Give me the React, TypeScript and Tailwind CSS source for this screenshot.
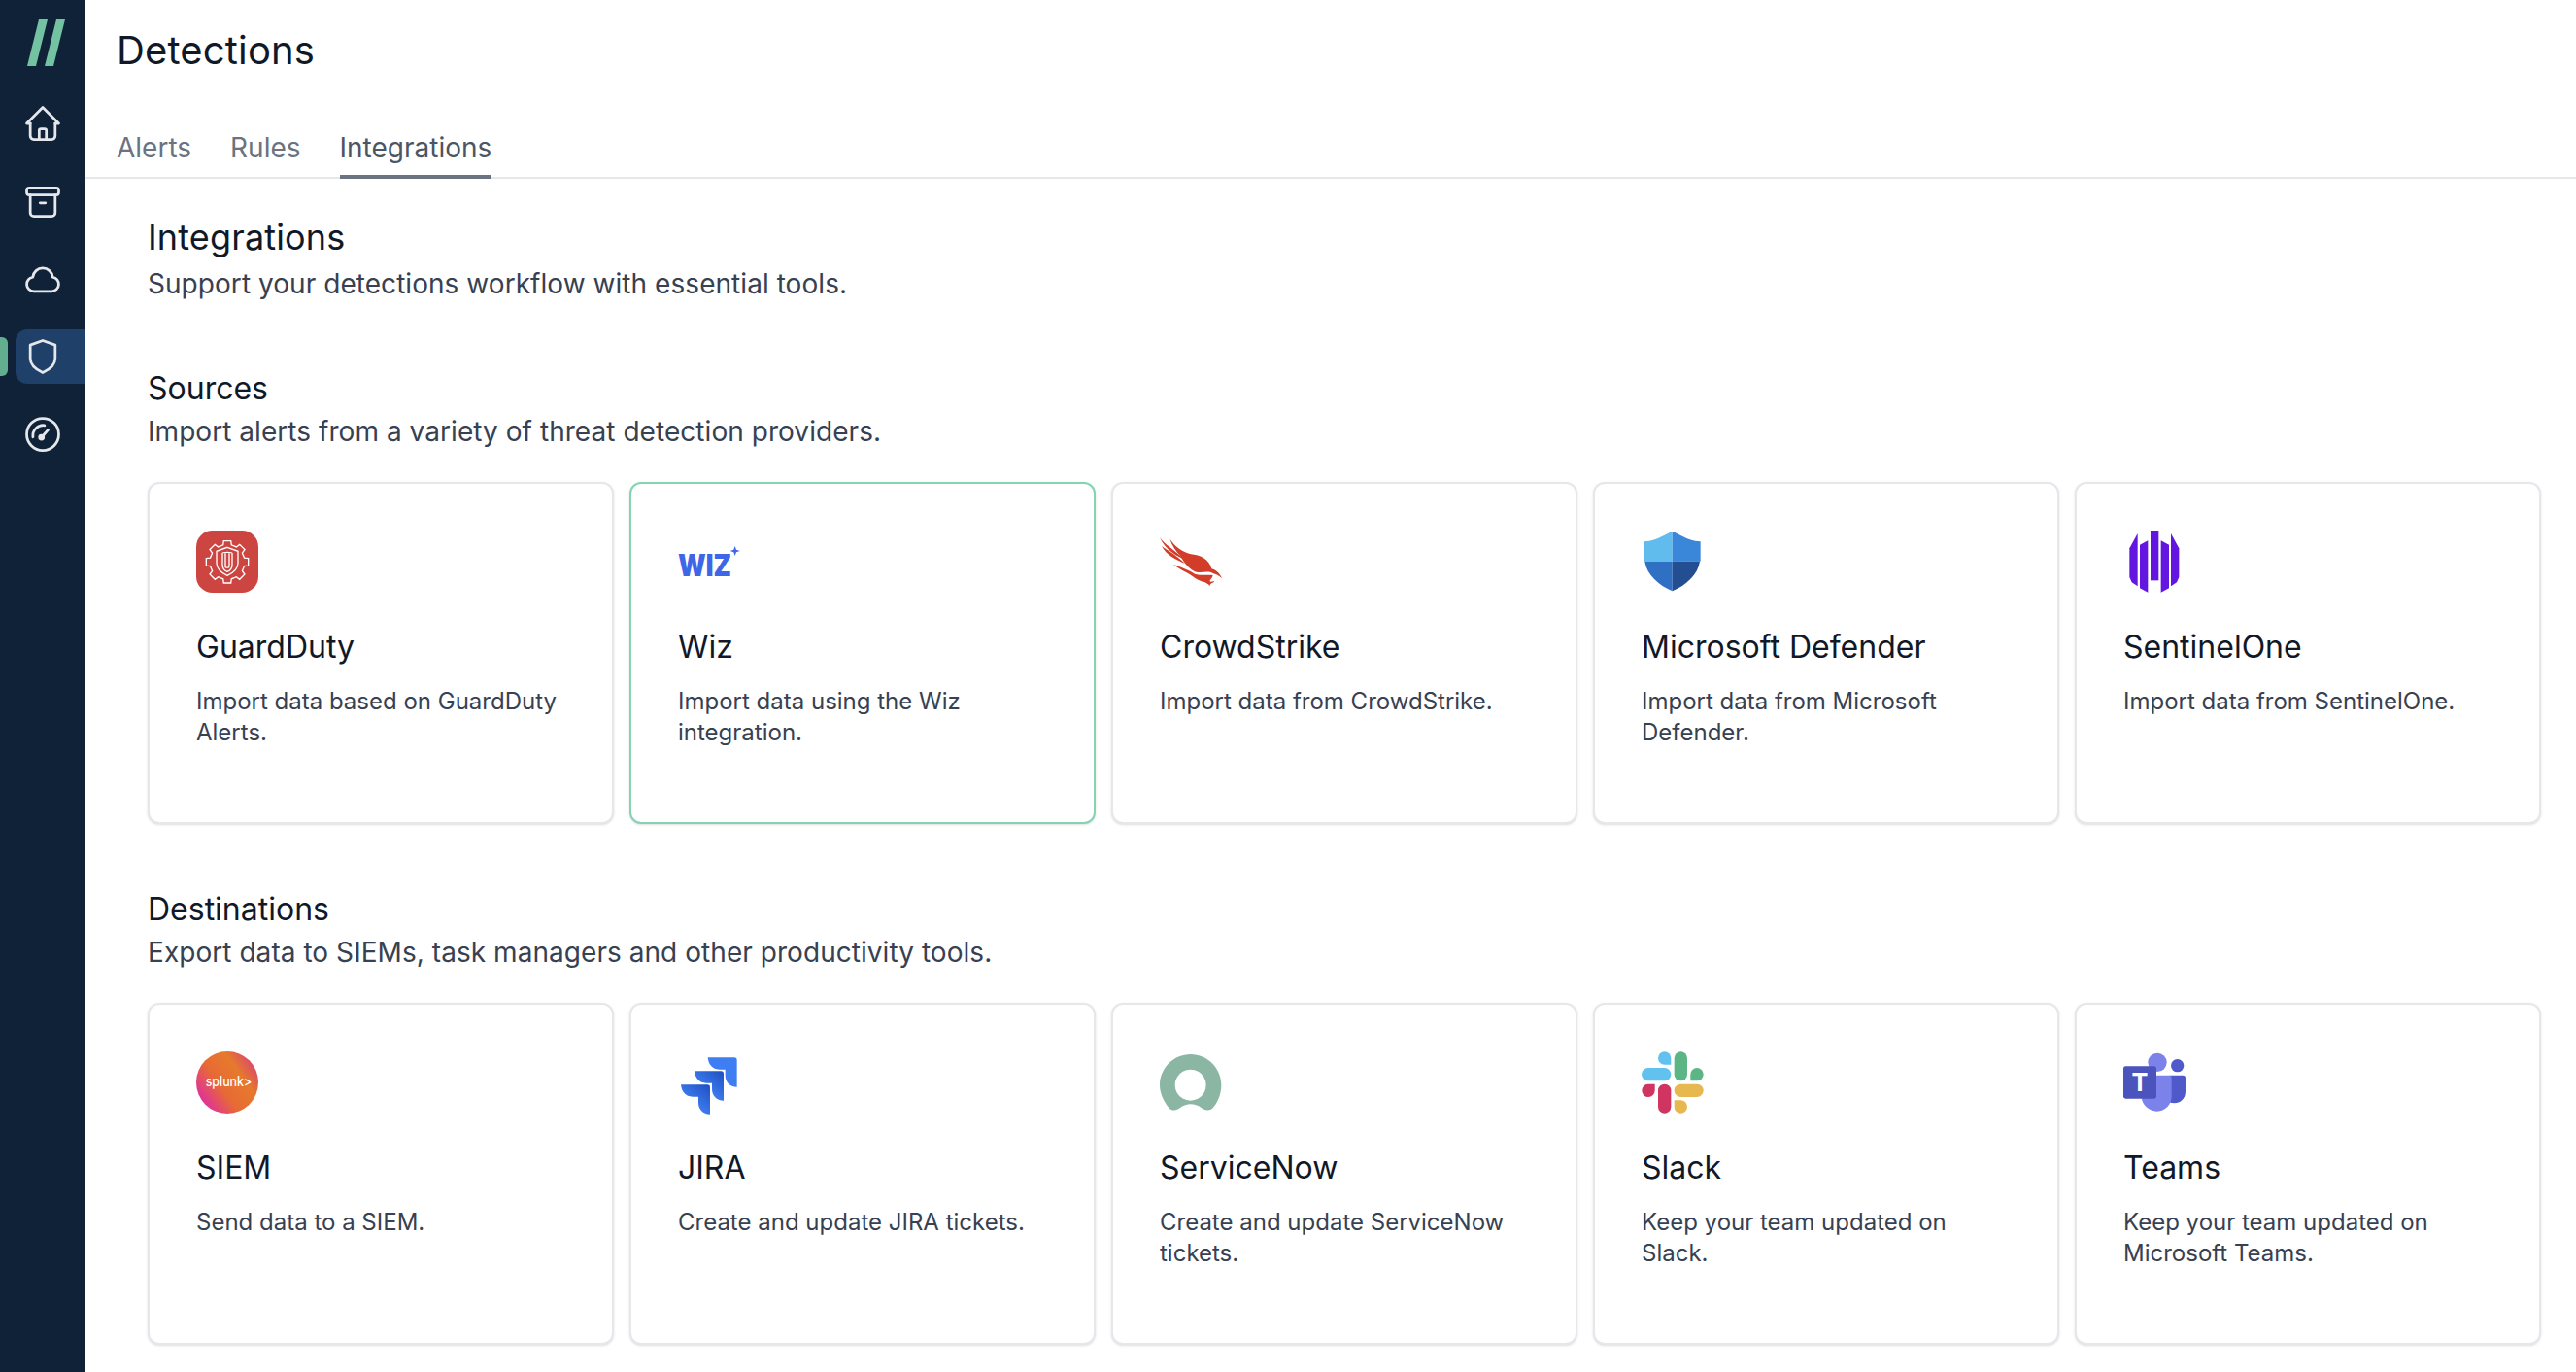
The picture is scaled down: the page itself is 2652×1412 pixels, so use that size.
import { ReactNode } from "react";

const gearPoints = () => {
  const pts: string[] = [];
  for (let i = 0; i < 8; i++) {
    const a = (i * Math.PI) / 4 - Math.PI / 2;
    const step = [
      [-0.24, 54],
      [-0.17, 66],
      [0.17, 66],
      [0.24, 54],
    ];
    step.forEach(([d, r]) => {
      pts.push(`${(162 + r * Math.cos(a + d)).toFixed(1)},${(145 + r * Math.sin(a + d)).toFixed(1)}`);
    });
  }
  return pts.join(" ");
};

const Logo = ({ box, children }: { box: string; children: ReactNode }) => (
  <svg viewBox={box} className="h-16 w-16 overflow-visible">
    {children}
  </svg>
);

const GuardDuty = () => (
  <Logo box="66 48 192 192">
    <rect x="66" y="48" width="192" height="192" rx="50" fill="#cd4540" />
    <g fill="none" stroke="#fff" strokeWidth="4">
      <polygon points={gearPoints()} />
      <path d="M162 100 L195 112 V148 C195 168 178 180 162 187 C146 180 129 168 129 148 V112 Z" />
      <path d="M147 118 C147 114 177 114 177 118 V152 C177 164 170 172 162 175 C154 172 147 164 147 152 Z" />
      <path d="M156 118 V158 C156 164 168 164 168 158 V118" />
    </g>
  </Logo>
);

const Wiz = () => (
  <Logo box="114 78 192 192">
    <text x="114" y="219" textLength="165" lengthAdjust="spacingAndGlyphs" fontSize="96" fontWeight="900" fill="#3f66e6">
      WIZ
    </text>
    <path d="M290 126 L294 137 L305 141 L294 145 L290 156 L286 145 L275 141 L286 137 Z" fill="#3f66e6" />
  </Logo>
);

const CrowdStrike = () => (
  <Logo box="72 48 192 192">
    <g fill="#d23d2a">
      <path d="M103 74 C120 98 140 112 165 120 C200 124 224 136 232 166 C245 170 258 180 264 196 C255 186 245 182 236 180 C220 170 205 180 185 176 C165 170 148 150 136 126 C122 112 110 95 103 74 Z" />
      <path d="M72 69 C88 92 112 104 150 138 C126 128 88 108 72 69 Z" />
      <path d="M78 96 C96 110 122 122 150 150 C122 138 92 124 78 96 Z" />
      <path d="M114 154 C132 158 160 170 180 182 C200 188 216 184 236 186 C234 198 224 200 228 206 C234 206 238 204 241 206 C232 210 228 212 226 219 C222 212 216 212 212 208 C196 204 184 198 172 188 C156 178 134 168 114 154 Z" />
    </g>
  </Logo>
);

const Defender = () => (
  <Logo box="60 48 192 192">
    <path d="M155 52 C135 55 115 80 68 82 V143 H155 Z" fill="#5fbcec" />
    <path d="M155 52 C175 55 195 80 242 82 V143 H155 Z" fill="#3a86d8" />
    <path d="M70 143 H155 V235 C112 216 76 184 70 143 Z" fill="#2f6fc4" />
    <path d="M240 143 H155 V235 C198 216 234 184 240 143 Z" fill="#234f92" />
  </Logo>
);

const SentinelOne = () => (
  <Logo box="48 48 192 192">
    <g fill="#6316e0">
      <rect x="132" y="48" width="25" height="154" />
      <path d="M99 92 L124 79 V239 L99 226 Z" />
      <path d="M164 79 L189 92 V226 L164 239 Z" />
      <path d="M92 57 V220 L74 208 L67 192 V103 Z" />
      <path d="M195 57 V220 L213 208 L220 192 V103 Z" />
    </g>
  </Logo>
);

const Splunk = () => (
  <Logo box="66 66 192 192">
    <defs>
      <linearGradient id="splunkGrad" x1="0" y1="0.85" x2="1" y2="0.15">
        <stop offset="0.08" stopColor="#e0309c" />
        <stop offset="0.4" stopColor="#e76a35" />
        <stop offset="0.7" stopColor="#e67a2c" />
        <stop offset="0.95" stopColor="#da4670" />
      </linearGradient>
    </defs>
    <circle cx="162" cy="162" r="96" fill="url(#splunkGrad)" />
    <text x="95" y="174" textLength="143" lengthAdjust="spacingAndGlyphs" fontSize="42" fontWeight="500" fill="#fff">
      splunk&gt;
    </text>
  </Logo>
);

const jiraPiece = "M146 85 H228 a8 8 0 0 1 8 8 V176 C214 176 200 160 200 140 V122 H182 C160 122 148 106 146 85 Z";

const Jira = () => (
  <Logo box="54 66 192 192">
    <defs>
      <linearGradient id="jiraGrad" x1="1" y1="0" x2="0.4" y2="0.7">
        <stop offset="0" stopColor="#1d4fc0" />
        <stop offset="1" stopColor="#3f7ef2" />
      </linearGradient>
    </defs>
    <path d={jiraPiece} fill="#3f7ef2" />
    <path d={jiraPiece} fill="url(#jiraGrad)" transform="translate(-41,42)" />
    <path d={jiraPiece} fill="url(#jiraGrad)" transform="translate(-83,84)" />
  </Logo>
);

const ServiceNow = () => (
  <Logo box="72 66 192 192">
    <path
      fillRule="evenodd"
      fill="#8bb6a3"
      d="M167 75 C115 75 72 118 72 170 C72 195 85 222 100 240 C110 252 125 248 135 240 C155 225 180 225 200 240 C210 248 228 252 238 238 C252 222 262 195 262 170 C262 118 219 75 167 75 Z M167 122 A48 48 0 1 1 166.9 122 Z"
    />
  </Logo>
);

const Slack = () => (
  <Logo box="60 66 192 192">
    <path d="M131 67 a20 20 0 0 1 20 20 V107 H131 a20 20 0 0 1 0 -40 Z" fill="#62c2ef" />
    <rect x="60" y="117" width="91" height="40" rx="20" fill="#62c2ef" />
    <rect x="161" y="67" width="40" height="90" rx="20" fill="#5bb585" />
    <path d="M231 117 a20 20 0 0 1 0 40 H211 V137 a20 20 0 0 1 20 -20 Z" fill="#5bb585" />
    <path d="M80 167 H101 V187 a20 20 0 1 1 -21 -20 Z" fill="#cf3560" />
    <rect x="111" y="167" width="40" height="90" rx="20" fill="#cf3560" />
    <rect x="161" y="167" width="90" height="40" rx="20" fill="#e6b84f" />
    <path d="M161 217 H181 a20 20 0 0 1 0 40 a20 20 0 0 1 -20 -20 Z" fill="#e6b84f" />
  </Logo>
);

const Teams = () => (
  <Logo box="48 66 192 192">
    <circle cx="215" cy="110" r="20" fill="#5059c9" />
    <path d="M190 140 H232 a8 8 0 0 1 8 8 V190 C240 212 224 226 205 226 C195 226 190 222 190 222 Z" fill="#5059c9" />
    <circle cx="153" cy="100" r="29" fill="#7b83eb" />
    <path d="M112 140 H190 a7 7 0 0 1 7 7 V205 C197 232 176 251 152 251 C128 251 104 232 104 205 V148 a8 8 0 0 1 8 -8 Z" fill="#7b83eb" />
    <rect x="48" y="112" width="102" height="100" rx="7" fill="#4b53bc" />
    <text x="99" y="188" textAnchor="middle" fontSize="76" fontWeight="700" fill="#fff">
      T
    </text>
  </Logo>
);

const iconProps = {
  viewBox: "0 0 24 24",
  fill: "none",
  stroke: "#e5e7eb",
  strokeWidth: 1.5,
  strokeLinecap: "round" as const,
  strokeLinejoin: "round" as const,
  className: "h-11 w-11",
};

const HomeIcon = () => (
  <svg {...iconProps}>
    <path d="M5 12H3l9-9 9 9h-2" />
    <path d="M5 12v7a2 2 0 0 0 2 2h10a2 2 0 0 0 2-2v-7" />
    <path d="M10 21v-5a1 1 0 0 1 1-1h2a1 1 0 0 1 1 1v5" />
  </svg>
);

const ArchiveIcon = () => (
  <svg {...iconProps}>
    <rect x="3" y="4.500" width="18" height="4" rx="1.4" />
    <path d="M5 8.500v10a2 2 0 0 0 2 2h10a2 2 0 0 0 2-2v-10" />
    <path d="M10.500 13h3" />
  </svg>
);

const CloudIcon = () => (
  <svg {...iconProps}>
    <path d="M7 19a4 4 0 0 1-.6-7.950A5.600 5.600 0 0 1 12 6a5.600 5.600 0 0 1 5.600 5.050A4 4 0 0 1 17 19Z" />
  </svg>
);

const ShieldIcon = () => (
  <svg {...iconProps}>
    <path d="M12 3 19 5.500v7.500c0 3.600-3.400 6.400-7 8-3.600-1.600-7-4.400-7-8V5.500Z" />
  </svg>
);

const GaugeIcon = () => (
  <svg {...iconProps}>
    <circle cx="12" cy="12" r="9" />
    <path d="M6.500 13.500a5.800 5.800 0 0 1 6.500-6.500" />
    <path d="M11.500 13.500l3.500-4" />
    <circle cx="11.300" cy="13.700" r="1.100" fill="#e5e7eb" />
  </svg>
);

const NavItem = ({ active, children }: { active?: boolean; children: ReactNode }) => (
  <div className="relative flex h-14 items-center pl-4">
    {active && <span className="absolute left-0 top-2 h-10 w-2 rounded-r-md bg-[#62ae8f]" />}
    <div className={`flex h-14 w-[72px] items-center rounded-l-xl pl-[6px] ${active ? "bg-[#1f4068]" : ""}`}>
      {children}
    </div>
  </div>
);

const Sidebar = () => (
  <aside className="flex h-full w-[88px] shrink-0 flex-col bg-[#102238]">
    <div className="flex h-[99px] items-start pl-[27px] pt-5">
      <svg viewBox="0 0 42 48" className="h-12 w-[42px]">
        <path d="M13 0h9L10 48H1Z M31 0h9L28 48h-9Z" fill="#73c2a1" />
      </svg>
    </div>
    <nav className="flex flex-col gap-6">
      <NavItem>
        <HomeIcon />
      </NavItem>
      <NavItem>
        <ArchiveIcon />
      </NavItem>
      <NavItem>
        <CloudIcon />
      </NavItem>
      <NavItem active>
        <ShieldIcon />
      </NavItem>
      <NavItem>
        <GaugeIcon />
      </NavItem>
    </nav>
  </aside>
);

type CardData = { title: string; text: string; logo: ReactNode; selected?: boolean };

const sources: CardData[] = [
  { title: "GuardDuty", text: "Import data based on GuardDuty Alerts.", logo: <GuardDuty /> },
  { title: "Wiz", text: "Import data using the Wiz integration.", logo: <Wiz />, selected: true },
  { title: "CrowdStrike", text: "Import data from CrowdStrike.", logo: <CrowdStrike /> },
  { title: "Microsoft Defender", text: "Import data from Microsoft Defender.", logo: <Defender /> },
  { title: "SentinelOne", text: "Import data from SentinelOne.", logo: <SentinelOne /> },
];

const destinations: CardData[] = [
  { title: "SIEM", text: "Send data to a SIEM.", logo: <Splunk /> },
  { title: "JIRA", text: "Create and update JIRA tickets.", logo: <Jira /> },
  { title: "ServiceNow", text: "Create and update ServiceNow tickets.", logo: <ServiceNow /> },
  { title: "Slack", text: "Keep your team updated on Slack.", logo: <Slack /> },
  { title: "Teams", text: "Keep your team updated on Microsoft Teams.", logo: <Teams /> },
];

const Card = ({ title, text, logo, selected }: CardData) => (
  <div
    className={`h-[352px] rounded-xl border-2 bg-white px-12 pt-12 shadow-sm ${
      selected ? "border-[#84d4b4]" : "border-[#e5e7eb]"
    }`}
  >
    {logo}
    <h3 className="mt-9 text-[32px] leading-10 text-[#111827]">{title}</h3>
    <p className="mt-5 text-[24px] leading-8 text-[#374151]">{text}</p>
  </div>
);

const Section = ({ title, text, cards }: { title: string; text: string; cards: CardData[] }) => (
  <section>
    <h2 className="text-[32px] leading-10 text-[#111827]">{title}</h2>
    <p className="mt-[6px] text-[28px] leading-9 tracking-[0.05px] text-[#374151]">{text}</p>
    <div className="mt-[34px] grid grid-cols-5 gap-4">
      {cards.map((card) => (
        <Card key={card.title} {...card} />
      ))}
    </div>
  </section>
);

export default function App() {
  return (
    <div className="flex h-screen overflow-hidden bg-white font-['Inter',sans-serif]">
      <Sidebar />
      <main className="min-w-0 flex-1">
        <header className="h-[184px] border-b-2 border-[#e5e7eb] pl-8">
          <h1 className="pt-7 text-[40px] leading-12 tracking-[0.15px] text-[#111827]">Detections</h1>
          <div className="mt-[58px] flex gap-10 text-[28px] leading-9 text-[#6b7280]">
            <span>Alerts</span>
            <span>Rules</span>
            <span className="h-[50px] border-b-4 border-[#6b7280] text-[#4b5563]">Integrations</span>
          </div>
        </header>
        <div className="pl-16 pr-9 pt-[38px]">
          <h2 className="text-[36px] leading-11 tracking-[0.15px] text-[#111827]">Integrations</h2>
          <p className="mt-2 text-[28px] leading-9 tracking-[0.05px] text-[#374151]">Support your detections workflow with essential tools.</p>
          <div className="mt-[70px] flex flex-col gap-[68px]">
            <Section title="Sources" text="Import alerts from a variety of threat detection providers." cards={sources} />
            <Section title="Destinations" text="Export data to SIEMs, task managers and other productivity tools." cards={destinations} />
          </div>
        </div>
      </main>
    </div>
  );
}
